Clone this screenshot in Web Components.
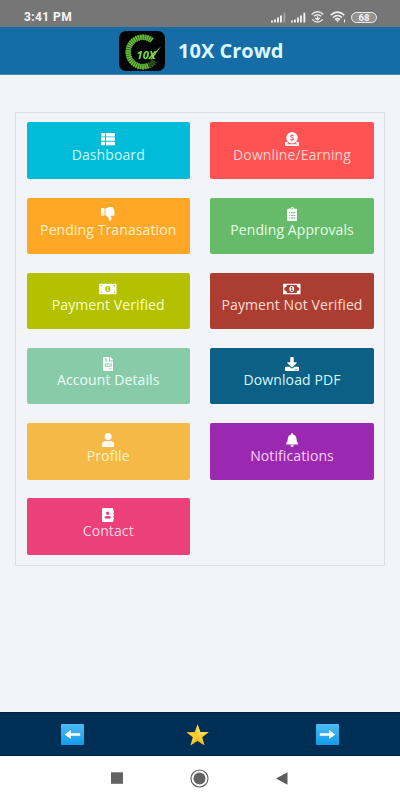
<!DOCTYPE html>
<html lang="en">
<head>
<meta charset="utf-8">
<meta name="viewport" content="width=device-width, initial-scale=1">
<title>10X Crowd</title>
<style>
  html, body {
    margin: 0;
    height: 100%;
    overflow: hidden;
  }
  body {
    font-family: "Open Sans", "Noto Sans", sans-serif;
    background: #f2f4f9;
  }
</style>
</head>
<body>
<crowd-app>
  <status-bar slot="top" time="3:41 PM" battery="68"></status-bar>
  <app-header slot="top">10X Crowd</app-header>

  <menu-panel>
    <menu-tile icon="list" style="--tile-bg: #00bcd8; --tile-text: #cdf8fc">Dashboard</menu-tile>
    <menu-tile icon="donate" style="--tile-bg: #ff5252; --tile-text: #ffd3cd">Downline/Earning</menu-tile>
    <menu-tile icon="thumbs-down" style="--tile-bg: #ffa726; --tile-text: #fff2cb">Pending Tranasation</menu-tile>
    <menu-tile icon="clipboard" style="--tile-bg: #66bb6a; --tile-text: #e7ffe6">Pending Approvals</menu-tile>
    <menu-tile icon="money" style="--tile-bg: #b3c100; --tile-text: #fcffc5">Payment Verified</menu-tile>
    <menu-tile icon="money-alt" style="--tile-bg: #ac3e31; --tile-text: #ffdfd7">Payment Not Verified</menu-tile>
    <menu-tile icon="invoice" style="--tile-bg: #87cba9; --tile-text: #edfff6">Account Details</menu-tile>
    <menu-tile icon="download" style="--tile-bg: #0c5f85; --tile-text: #d7f7ff">Download PDF</menu-tile>
    <menu-tile icon="user" style="--tile-bg: #f4b947; --tile-text: #fff5c9">Profile</menu-tile>
    <menu-tile icon="bell" style="--tile-bg: #9b28b1; --tile-text: #fbd3ff">Notifications</menu-tile>
    <menu-tile icon="contact" style="--tile-bg: #ec407a; --tile-text: #ffd5e4">Contact</menu-tile>
  </menu-panel>

  <tab-bar slot="bottom"></tab-bar>
  <system-nav slot="bottom"></system-nav>
</crowd-app>

<script>
(() => {
  // [viewBox width, markup], all drawn on a 512 high grid
  const ICONS = {
    list: [512, '<path d="M24 32h101a24 24 0 0 1 24 24v80a24 24 0 0 1-24 24H24a24 24 0 0 1-24-24V56a24 24 0 0 1 24-24zM24 192h101a24 24 0 0 1 24 24v80a24 24 0 0 1-24 24H24a24 24 0 0 1-24-24v-80a24 24 0 0 1 24-24zM24 352h101a24 24 0 0 1 24 24v80a24 24 0 0 1-24 24H24a24 24 0 0 1-24-24v-80a24 24 0 0 1 24-24zM181 32h307a24 24 0 0 1 24 24v80a24 24 0 0 1-24 24H181zM181 192h307a24 24 0 0 1 24 24v80a24 24 0 0 1-24 24H181zM181 352h307a24 24 0 0 1 24 24v80a24 24 0 0 1-24 24H181z"/>'],
    donate: [512, '<circle cx="256" cy="208" r="208"/><path d="M480 352h-48c-16 26-37 48-61 64h52c5 0 9 4 9 8v16c0 4-4 8-9 8H89c-5 0-9-4-9-8v-16c0-4 4-8 9-8h52c-24-16-45-38-61-64H32c-18 0-32 14-32 32v96c0 18 14 32 32 32h448c18 0 32-14 32-32v-96c0-18-14-32-32-32z"/><path d="M314 142c-18-22-92-34-104 12-10 58 96 40 98 98-4 54-88 48-112 18M256 82v46M256 292v44" fill="none" stroke="var(--tile-bg)" stroke-width="38"/>'],
    'thumbs-down': [512, '<path fill-rule="evenodd" d="M0 56v240c0 13 11 24 24 24h80c13 0 24-11 24-24V56c0-13-11-24-24-24H24C11 32 0 43 0 56zm40 200a24 24 0 1 1 48 0 24 24 0 1 1-48 0zm272 256c-20-20-17-61-27-84-13-30-45-66-69-91-8-13-22-25-47-28-5-1-9-6-9-11V59c0-7 6-12 12-12C227 44 275 0 343 0c68 0 116 2 114 60 20 25 26 50 17 76 21 25 23 61 11 83 22 25 25 101-39 101h-99c13 34 37 56 37 111 0 69-42 85-72 81z"/>'],
    clipboard: [384, '<path fill-rule="evenodd" d="M336 64h-80a64 64 0 0 0-128 0H48C22 64 0 86 0 112v352c0 26 22 48 48 48h288c26 0 48-22 48-48V112c0-26-22-48-48-48zM192 40a24 24 0 1 1 0 48 24 24 0 1 1 0-48zM96 184a24 24 0 1 1 0 48 24 24 0 1 1 0-48zm0 96a24 24 0 1 1 0 48 24 24 0 1 1 0-48zm0 96a24 24 0 1 1 0 48 24 24 0 1 1 0-48zM152 192h144c5 0 8 3 8 8v16c0 5-3 8-8 8H152c-5 0-8-3-8-8v-16c0-5 3-8 8-8zm0 96h144c5 0 8 3 8 8v16c0 5-3 8-8 8H152c-5 0-8-3-8-8v-16c0-5 3-8 8-8zm0 96h144c5 0 8 3 8 8v16c0 5-3 8-8 8H152c-5 0-8-3-8-8v-16c0-5 3-8 8-8z"/>'],
    money: [640, '<rect y="64" width="640" height="384" rx="32"/><g fill="var(--tile-bg)"><ellipse cx="320" cy="256" rx="96" ry="108"/><circle cx="80" cy="136" r="26"/><circle cx="560" cy="136" r="26"/><circle cx="80" cy="376" r="26"/><circle cx="560" cy="376" r="26"/></g><path d="M288 206l28-16h20v116h18v22h-66v-22h18v-78l-18 4z"/>'],
    'money-alt': [640, '<rect y="64" width="640" height="384" rx="32"/><path d="M144 112h352c0 53 43 96 96 96v96c-53 0-96 43-96 96H144c0-53-43-96-96-96v-96c53 0 96-43 96-96z" fill="var(--tile-bg)"/><ellipse cx="320" cy="256" rx="88" ry="112"/><path d="M276 203l36-20h26v120h25v28h-86v-28h25v-83l-26 6z" fill="var(--tile-bg)"/>'],
    invoice: [384, '<path fill-rule="evenodd" d="M24 0h200v136c0 13 11 24 24 24h136v328c0 13-11 24-24 24H24c-13 0-24-11-24-24V24C0 11 11 0 24 0zm40 64v32h96V64zm0 64v32h96v-32zm0 112v112h256V240zm32 32h192v48H96zm128 144v32h96v-32zM256 0h6c6 0 13 3 17 7l98 98c4 4 7 11 7 17v6H256z"/>'],
    download: [512, '<path fill-rule="evenodd" d="M216 0h80c13 0 24 11 24 24v168h88c18 0 27 22 14 34L270 378c-8 8-20 8-28 0L90 226c-13-12-4-34 14-34h88V24c0-13 11-24 24-24zm296 376v112c0 13-11 24-24 24H24c-13 0-24-11-24-24V376c0-13 11-24 24-24h147l49 49c20 20 52 20 72 0l49-49h147c13 0 24 11 24 24zM388 464a20 20 0 1 0-40 0 20 20 0 1 0 40 0zm64 0a20 20 0 1 0-40 0 20 20 0 1 0 40 0z"/>'],
    user: [448, '<path d="M224 256a128 128 0 1 0 0-256 128 128 0 1 0 0 256zm90 32h-17a174 174 0 0 1-146 0h-17C60 288 0 348 0 422v42c0 26 22 48 48 48h352c26 0 48-22 48-48v-42c0-74-60-134-134-134z"/>'],
    bell: [448, '<path d="M224 512c35 0 64-29 64-64H160c0 35 29 64 64 64zm215-150c-19-20-55-52-55-154 0-78-54-140-128-155V32a32 32 0 1 0-64 0v21C118 68 64 130 64 208c0 102-36 134-55 154-6 6-9 14-9 22 0 16 13 32 32 32h384c19 0 32-16 32-32 0-8-3-16-9-22z"/>'],
    contact: [448, '<path fill-rule="evenodd" d="M436 160c7 0 12-5 12-12v-40c0-7-5-12-12-12h-20V48c0-26-22-48-48-48H48C22 0 0 22 0 48v416c0 26 22 48 48 48h320c26 0 48-22 48-48v-48h20c7 0 12-5 12-12v-40c0-7-5-12-12-12h-20v-64h20c7 0 12-5 12-12v-40c0-7-5-12-12-12h-20v-64zM208 128a64 64 0 1 1 0 128 64 64 0 1 1 0-128zm112 237c0 10-10 19-22 19H118c-12 0-22-9-22-19v-19c0-32 30-58 67-58h5a103 103 0 0 0 80 0h5c37 0 67 26 67 58z"/>'],
  };

  class CrowdApp extends HTMLElement {
    constructor() {
      super();
      this.attachShadow({ mode: 'open' }).innerHTML = `
        <style>
          :host {
            height: 100%;
            display: flex;
            flex-direction: column;
          }
          main {
            flex: 1;
            min-height: 0;
            padding: 37px 15px 0;
          }
        </style>
        <slot name="top"></slot>
        <main><slot></slot></main>
        <slot name="bottom"></slot>
      `;
    }
  }

  class StatusBar extends HTMLElement {
    constructor() {
      super();
      this.attachShadow({ mode: 'open' });
    }

    connectedCallback() {
      const signal = (last) => `
        <svg width="15" height="11" viewBox="0 0 15 11" fill="#f1f1f1">
          <path d="M0 8.6h1.9v1.9H0zM3 7.4h1.9v3.1H3zM6 5.5h1.9v5H6zM9 3.4h1.9v7.1H9z"/>
          <path d="M12.4 .7h1.9v9.8h-1.9z" opacity="${last}"/>
        </svg>
      `;

      this.shadowRoot.innerHTML = `
        <style>
          :host {
            box-sizing: border-box;
            height: 27px;
            padding: 7px 23px 0 24px;
            display: flex;
            align-items: center;
            justify-content: space-between;
            color: #f6f6f6;
            background: #767676;
          }
          .time {
            font: bold 12px/20px Roboto, sans-serif;
            letter-spacing: .4px;
          }
          .icons {
            display: flex;
            align-items: center;
            gap: 5.3px;
          }
          .battery {
            box-sizing: border-box;
            width: 26px;
            height: 11px;
            border: 1.4px solid #eee;
            border-radius: 6px;
            font: bold 9.5px/9px Roboto, sans-serif;
            text-align: center;
            background: #929292;
          }
        </style>
        <span class="time">${this.getAttribute('time')}</span>
        <div class="icons">
          ${signal(.35)}
          ${signal(1)}
          <svg width="13" height="12" viewBox="0 0 13 12" fill="none" stroke="#f1f1f1" stroke-width="1.3">
            <path d="M.6 3.4Q6.5-1.9 12.4 3.4M2.8 5.3q3.7-3.2 7.4 0M1.2 8.4q5.3 5.4 10.6 0"/>
            <path d="M6.5 5.3v3M4.2 7l2.3 2 2.3-2"/>
          </svg>
          <svg width="16" height="12" viewBox="0 0 16 12" fill="none" stroke="#f1f1f1" stroke-width="1.6">
            <path d="M.7 4.1q6.8-6 13.6 0M2.9 6.5q4.6-4 9.2 0M5.1 8.7q2.4-2 4.8 0"/>
            <path d="M5.8 9.3h3.4l-1.7 2zM14 8.5h1v3h-1z" fill="#f1f1f1" stroke="none"/>
          </svg>
          <div class="battery">${this.getAttribute('battery')}</div>
        </div>
      `;
    }
  }

  class AppHeader extends HTMLElement {
    constructor() {
      super();
      this.attachShadow({ mode: 'open' }).innerHTML = `
        <style>
          :host {
            box-sizing: border-box;
            height: 48px;
            border-bottom: 1px solid #4489b5;
            padding-left: 2.5px;
            display: flex;
            align-items: center;
            justify-content: center;
            gap: 13px;
            color: #dcf8ff;
            background: #156ca6;
          }
          h1 {
            margin: 0;
            font-size: 20px;
            font-weight: 700;
            line-height: 40px;
          }
          svg text {
            font: italic bold 10.5px "Open Sans", sans-serif;
          }
        </style>
        <svg width="46" height="40" viewBox="0 0 46 40">
          <rect width="46" height="40" rx="7" fill="#020403"/>
          <path d="M33 9.4A14.7 14.7 0 1 0 35.5 30" fill="none" stroke="#2b5b19" stroke-width="5"/>
          <path d="M33 9.4A14.7 14.7 0 1 0 35.5 30" fill="none" stroke="#6abf3c" stroke-width="5.6" stroke-dasharray="1.5 .7"/>
          <path d="M29 33.5a14.7 14.7 0 0 0 8-6.5" fill="none" stroke="#020403" stroke-width="7" opacity=".55"/>
          <text x="17.5" y="28.3" fill="#7ddc43" textLength="19" lengthAdjust="spacingAndGlyphs">10X</text>
          <path d="M31.5 28.5Q36 20 42 15.5 37.5 21.5 32.8 28.5z" fill="#7ddc43"/>
        </svg>
        <h1><slot></slot></h1>
      `;
    }
  }

  class MenuPanel extends HTMLElement {
    constructor() {
      super();
      this.attachShadow({ mode: 'open' }).innerHTML = `
        <style>
          :host {
            box-sizing: border-box;
            height: 454px;
            border: 1px solid #dcdfe3;
            padding: 9.4px 10.3px 0 10.6px;
            display: grid;
            grid-template-columns: 1fr 1fr;
            grid-auto-rows: 56.4px;
            align-content: start;
            gap: 18.8px 20.5px;
          }
        </style>
        <slot></slot>
      `;
    }
  }

  class MenuTile extends HTMLElement {
    constructor() {
      super();
      this.attachShadow({ mode: 'open' });
    }

    connectedCallback() {
      const [width, markup] = ICONS[this.getAttribute('icon')];
      const iconHeight = 14;

      this.shadowRoot.innerHTML = `
        <style>
          :host {
            box-sizing: border-box;
            padding-top: 9.4px;
            border-radius: 2px;
            display: flex;
            flex-direction: column;
            align-items: center;
            background: var(--tile-bg);
          }
          svg {
            display: block;
            fill: #fff;
          }
          span {
            color: var(--tile-text, #fff);
            font-size: 14px;
            line-height: 18px;
            letter-spacing: .1px;
            white-space: nowrap;
          }
        </style>
        <svg width="${width / 512 * iconHeight}" height="${iconHeight}" viewBox="0 0 ${width} 512">${markup}</svg>
        <span><slot></slot></span>
      `;
    }
  }

  class TabBar extends HTMLElement {
    constructor() {
      super();
      const key = (id, arrow) => `
        <svg width="23" height="21" viewBox="0 0 23 21">
          <defs>
            <linearGradient id="${id}" x2="0" y2="1">
              <stop stop-color="#4dbcf4"/>
              <stop offset="1" stop-color="#129be8"/>
            </linearGradient>
          </defs>
          <rect width="23" height="21" rx="1" fill="url(#${id})"/>
          <path d="${arrow}" fill="#fff"/>
        </svg>
      `;

      this.attachShadow({ mode: 'open' }).innerHTML = `
        <style>
          :host {
            box-sizing: border-box;
            height: 44px;
            border: solid #001f42;
            border-width: 1px 0;
            padding: 1px 61px 0;
            display: flex;
            align-items: center;
            justify-content: space-between;
            background: #002f55;
          }
          .star {
            margin-right: 5px;
          }
        </style>
        ${key('back', 'M3.8 10.5l6-4.6v3.4h9.4v2.4H9.8v3.4z')}
        <svg class="star" width="23" height="22" viewBox="0 0 23 22">
          <path d="M11.5.3l2.8 7.6 8.4.3-6.5 5.1 2.3 8-7-4.5-7 4.5 2.3-8L.3 8.2l8.4-.3z" fill="#fdcb30"/>
          <path d="M11.5.3l2.8 7.6 8.4.3-11.2 4.2z" fill="#ffdc4a"/>
          <path d="M11.5 12.4l7 8.9-7-4.5-7 4.5z" fill="#f8bb2b"/>
        </svg>
        ${key('forward', 'M19.2 10.5l-6-4.6v3.4H3.8v2.4h9.4v3.4z')}
      `;
    }
  }

  class SystemNav extends HTMLElement {
    constructor() {
      super();
      this.attachShadow({ mode: 'open' }).innerHTML = `
        <style>
          :host {
            box-sizing: border-box;
            height: 44px;
            padding: 0 112px 0 111px;
            display: flex;
            align-items: center;
            justify-content: space-between;
            background: #fff;
          }
        </style>
        <svg width="12" height="12"><rect y=".3" width="12" height="11.5" fill="#636363"/></svg>
        <svg width="19" height="19" viewBox="0 0 19 19">
          <circle cx="9.5" cy="9.5" r="8.5" fill="none" stroke="#5c5c5c" stroke-width="1.1"/>
          <circle cx="9.5" cy="9.5" r="6" fill="#636363"/>
        </svg>
        <svg width="12" height="13"><path d="M0 6.5L11.5.2v12.6z" fill="#5c5c5c"/></svg>
      `;
    }
  }

  customElements.define('crowd-app', CrowdApp);
  customElements.define('status-bar', StatusBar);
  customElements.define('app-header', AppHeader);
  customElements.define('menu-panel', MenuPanel);
  customElements.define('menu-tile', MenuTile);
  customElements.define('tab-bar', TabBar);
  customElements.define('system-nav', SystemNav);
})();
</script>
</body>
</html>
